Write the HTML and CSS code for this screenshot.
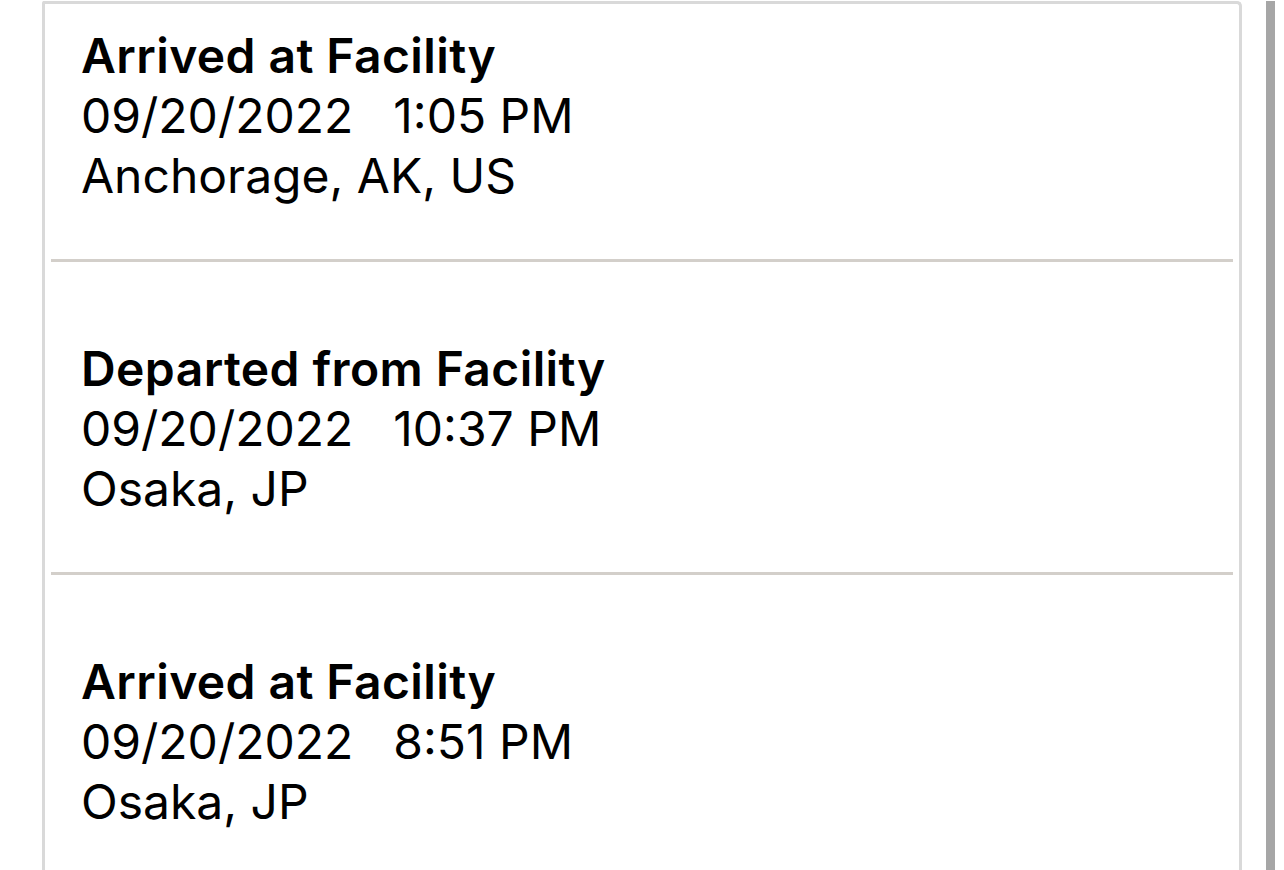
FILE: index.html
```html
<!DOCTYPE html>
<html lang="en">

<head>
    <meta charset="UTF-8">
    <meta name="viewport" content="width=device-width, initial-scale=1.0">
    <title>Tracking History</title>
    <link rel="stylesheet" href="styles.css">
</head>

<body>
    <div class="page">
        <div class="card">
            <div class="event first">
                <div class="status">Arrived at Facility</div>
                <div class="when">09/20/2022<span class="time">1:05 PM</span></div>
                <div class="where">Anchorage, AK, US</div>
            </div>
            <div class="divider"></div>
            <div class="event">
                <div class="status">Departed from Facility</div>
                <div class="when">09/20/2022<span class="time">10:37 PM</span></div>
                <div class="where">Osaka, JP</div>
            </div>
            <div class="divider"></div>
            <div class="event">
                <div class="status">Arrived at Facility</div>
                <div class="when">09/20/2022<span class="time">8:51 PM</span></div>
                <div class="where">Osaka, JP</div>
            </div>
        </div>
        <div class="scrollbar"></div>
    </div>
</body>

</html>
```

FILE: styles.css
```css
html,
body {
    margin: 0;
    padding: 0;
    height: 100%;
    overflow: hidden;
    background-color: #fff;
}

body {
    font-family: Inter, "Noto Sans", Arial, sans-serif;
    color: #000;
}

.page {
    display: flex;
    height: 100%;
    padding-top: 1px;
    box-sizing: border-box;
}

.card {
    margin-left: 42px;
    width: 1200px;
    box-sizing: border-box;
    border: 3px solid #d9d9d9;
    border-bottom: none;
    border-radius: 2px 5px 0 0;
    background-color: #fff;
    height: 1000px;
}

.event {
    padding: 77px 36px 53px 36px;
    font-size: 48px;
    line-height: 60px;
}

.event.first {
    padding-top: 22px;
    padding-bottom: 53px;
}

.status {
    font-weight: 600;
    letter-spacing: 0.4px;
}

.time {
    margin-left: 40px;
}

.divider {
    height: 3px;
    margin: 0 6px;
    background-color: #d3cfca;
}

.scrollbar {
    margin-left: 24px;
    width: 9px;
    background-color: #a6a6a6;
}
```
